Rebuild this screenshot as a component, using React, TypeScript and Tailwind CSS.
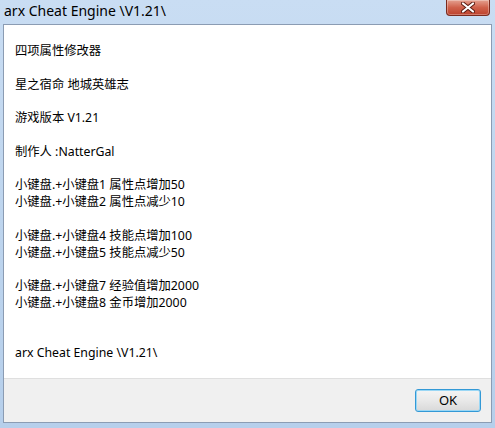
import React from "react";

const lines = [
  "四项属性修改器",
  "",
  "星之宿命 地城英雄志",
  "",
  "游戏版本 V1.21",
  "",
  "制作人 :NatterGal",
  "",
  "小键盘.+小键盘1 属性点增加50",
  "小键盘.+小键盘2 属性点减少10",
  "",
  "小键盘.+小键盘4 技能点增加100",
  "小键盘.+小键盘5 技能点减少50",
  "",
  "小键盘.+小键盘7 经验值增加2000",
  "小键盘.+小键盘8 金币增加2000",
  "",
  "",
  "arx Cheat Engine \\V1.21\\",
];

function CloseGlyph() {
  return (
    <svg width="14" height="11" viewBox="0 0 14 11">
      <path
        d="M2 1.5 L12 9.5 M12 1.5 L2 9.5"
        stroke="#5a1a10"
        strokeWidth="4"
        strokeLinecap="round"
      />
      <path
        d="M2 1.5 L12 9.5 M12 1.5 L2 9.5"
        stroke="#ffffff"
        strokeWidth="2.2"
        strokeLinecap="round"
      />
    </svg>
  );
}

export default function App() {
  return (
    <div
      className="w-[495px] h-[428px] flex flex-col bg-gradient-to-b from-[#c9ddf3] via-[#bed5ee] to-[#b6cfeb] text-[12px] text-black overflow-hidden"
      style={{ fontFamily: '"Noto Sans", "Noto Sans CJK SC", sans-serif' }}
    >
      {/* Title bar */}
      <div className="h-[24px] flex items-start justify-between pl-[4px] pr-[5px]">
        <span className="text-[14px] leading-[21px] text-black">arx Cheat Engine \V1.21\</span>
        <button className="w-[44px] h-[16px] rounded-b-[4px] border border-t-0 border-[#7a2a1e] bg-gradient-to-b from-[#e4a090] via-[#cf614b] to-[#bd412d] flex items-center justify-center shadow-[inset_0_0_0_1px_rgba(255,255,255,0.3)]">
          <CloseGlyph />
        </button>
      </div>

      {/* Client */}
      <div className="flex-1 mx-[3px] mb-[5px] border border-[#8b9cb3] flex flex-col">
        <div className="flex-1 bg-white pl-[11px] pt-[18px]">
          {lines.map((l, i) => (
            <div key={i} className="h-[16.8px] leading-[16.8px] text-[12.3px] whitespace-pre">
              {l}
            </div>
          ))}
        </div>
        <div className="h-[44px] bg-[#f0f0f0] border-t border-[#dfdfdf] flex items-center justify-end pr-[10px]">
          <button className="w-[66px] h-[23px] rounded-[3px] border border-[#3399d6] bg-gradient-to-b from-[#f4f4f4] via-[#e9e9e9] to-[#d9d9d9] shadow-[inset_0_0_0_1px_#9ad7f5] text-[13px] leading-none">
            OK
          </button>
        </div>
      </div>
    </div>
  );
}
